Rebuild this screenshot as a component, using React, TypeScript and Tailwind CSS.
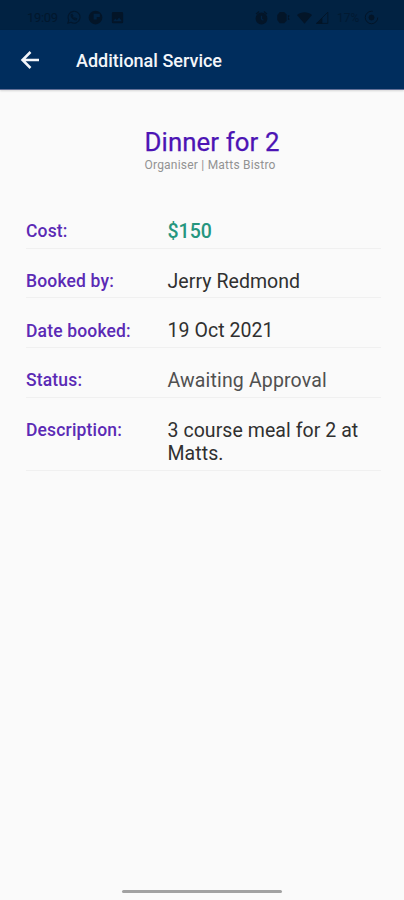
import React from 'react';

interface DetailRowProps {
  label: string;
  value: string;
  valueClass?: string;
  rowClass?: string;
}

const StatusBar: React.FC = () => (
  <div className="h-[30px] shrink-0 bg-[#012242] flex items-center pt-[5px] pl-[27px] pr-[25px] text-[#031528]">
    <span className="text-[13px] leading-none w-[30px] tracking-[-0.3px] opacity-80">19:09</span>
    <svg className="w-[15px] h-[15px] ml-[9px] opacity-80" viewBox="0 0 24 24" fill="none" stroke="currentColor" strokeWidth="1.8">
      <path d="M3 21l1.5-5A9.5 9.5 0 1 1 8 19.7z" />
      <path d="M8 8c0 4 4 8 8 8l1-2-3-1.5-1 1c-1.5-.5-2.5-1.5-3-3l1-1L9.5 7z" />
    </svg>
    <svg className="w-[15px] h-[15px] ml-[7px]" viewBox="0 0 24 24" fill="currentColor" fillRule="evenodd">
      <path d="M12 1a11 11 0 1 0 0 22 11 11 0 0 0 0-22zM9 6h10v5h-5v4H9z" />
    </svg>
    <svg className="w-[15px] h-[15px] ml-[7px]" viewBox="0 0 24 24" fill="currentColor" fillRule="evenodd">
      <path d="M5 3h14a2 2 0 0 1 2 2v14a2 2 0 0 1-2 2H5a2 2 0 0 1-2-2V5a2 2 0 0 1 2-2zm0 15h14l-4.5-6-3.5 4.5-2.5-3z" />
    </svg>

    <div className="ml-auto flex items-center">
      <svg className="w-[15px] h-[15px]" viewBox="0 0 24 24" fill="currentColor" fillRule="evenodd">
        <path d="M12 4a9.5 9.5 0 1 0 0 19 9.5 9.5 0 0 0 0-19zm-1 5h2v5l2.5 1.5-1 1.5-3.5-2.2z" />
        <path d="M7.5 1.5l1.3 1.6L4 7 2.7 5.4zM16.5 1.5l-1.3 1.6L20 7l1.3-1.6z" />
      </svg>
      <svg className="w-[15px] h-[15px] ml-[7px]" viewBox="0 0 24 24" fill="currentColor">
        <path d="M6 3h7l4 4v10l-4 4H6l-4-5V8z" />
        <path d="M19 8l3 1-2 3 2 3-3 1z" />
      </svg>
      <svg className="w-[15px] h-[15px] ml-[6px]" viewBox="0 0 24 24" fill="currentColor">
        <path d="M0 8C7 2 17 2 24 8L12 22z" />
      </svg>
      <svg className="w-[13px] h-[15px] ml-[4px]" viewBox="0 0 22 24" fill="none" stroke="currentColor" strokeWidth="1.5">
        <path d="M1 22L20 3v19z" />
        <path d="M1 22l9-9v9z" fill="currentColor" />
      </svg>
      <span className="text-[12px] leading-none ml-[8px] w-[23px] opacity-60">17%</span>
      <svg className="w-[15px] h-[15px] ml-[4px]" viewBox="0 0 24 24" fill="none" stroke="currentColor" strokeWidth="1.6">
        <circle cx="12" cy="12" r="10" strokeDasharray="48 15" />
        <circle cx="12" cy="12" r="4" fill="currentColor" />
      </svg>
    </div>
  </div>
);

const AppBar: React.FC = () => (
  <header className="h-[60px] shrink-0 bg-[#002d5d] border-b border-[#626f96] shadow-[0_1px_2px_rgba(0,0,0,0.15)] flex items-center">
    <button className="ml-[18px] mt-px w-6 h-6 text-[#f3f6fa]" aria-label="Back">
      <svg className="w-6 h-6" viewBox="0 0 24 24" fill="none" stroke="currentColor" strokeWidth="2.5">
        <path d="M21 12H5M12.5 4L4.5 12l8 8" />
      </svg>
    </button>
    <h1 className="ml-[34px] mt-[2px] text-[18px] font-medium text-[#f3f6fa]">Additional Service</h1>
  </header>
);

const DetailRow: React.FC<DetailRowProps> = ({ label, value, valueClass = 'text-[#303030] tracking-[0.06px]', rowClass = 'h-[49.7px]' }) => (
  <div className={`${rowClass} flex items-start border-b border-[#f0f0f0] pt-[20px]`}>
    <dt className="w-[141.5px] shrink-0 pt-[1.2px] text-[17.5px] leading-[23px] font-medium tracking-[0.16px] text-[#5b2ab5]">{label}</dt>
    <dd className={`text-[19.5px] leading-[23.5px] pt-[1px] ${valueClass}`}>{value}</dd>
  </div>
);

const App: React.FC = () => {
  return (
    <div className="w-[404px] h-[900px] bg-[#fafafa] flex flex-col overflow-hidden font-[Roboto,sans-serif]">
      <StatusBar />
      <AppBar />

      <main className="flex-1">
        <div className="ml-[144.5px] pt-[37px]">
          <h2 className="text-[25.8px] leading-[30px] tracking-[0.1px] text-[#4c14b4] [-webkit-text-stroke:0.25px_currentColor]">Dinner for 2</h2>
          <p className="mt-px text-[12px] leading-[14px] tracking-[0.22px] text-[#929292]">Organiser | Matts Bistro</p>
        </div>

        <dl className="mt-[27px] ml-[26px] mr-[23px]">
          <DetailRow label="Cost:" value="$150" valueClass="text-[#26967f] font-medium" />
          <DetailRow label="Booked by:" value="Jerry Redmond" />
          <DetailRow label="Date booked:" value="19 Oct 2021" />
          <DetailRow label="Status:" value="Awaiting Approval" valueClass="text-[#505050] tracking-[0.15px]" />
          <DetailRow label="Description:" value="3 course meal for 2 at Matts." rowClass="h-[73px]" />
        </dl>
      </main>

      <div className="w-[160px] h-[3px] mb-[7px] mx-auto shrink-0 rounded-full bg-[#a2a2a2]" />
    </div>
  );
};

export default App;
